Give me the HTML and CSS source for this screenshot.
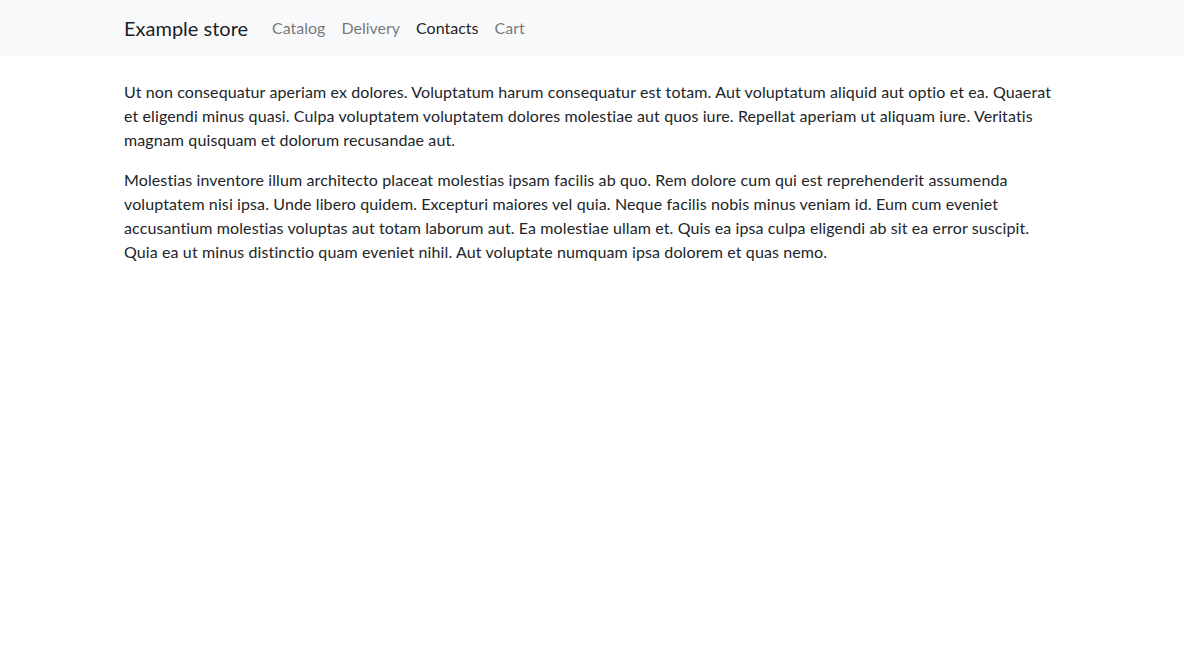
FILE: index.html
```html
<!DOCTYPE html>
<html lang="en">
<head>
<meta charset="utf-8">
<title>Example store</title>
<link rel="stylesheet" href="styles.css">
</head>
<body>
<nav class="navbar">
  <div class="container nav-inner">
    <a class="brand" href="#">Example store</a>
    <ul class="nav">
      <li><a class="nav-link" href="#">Catalog</a></li>
      <li><a class="nav-link" href="#">Delivery</a></li>
      <li><a class="nav-link active" href="#">Contacts</a></li>
      <li><a class="nav-link" href="#">Cart</a></li>
    </ul>
  </div>
</nav>
<main class="container content">
  <p>Ut non consequatur aperiam ex dolores. Voluptatum harum consequatur est totam. Aut voluptatum aliquid aut optio et ea. Quaerat et eligendi minus quasi. Culpa voluptatem voluptatem dolores molestiae aut quos iure. Repellat aperiam ut aliquam iure. Veritatis magnam quisquam et dolorum recusandae aut.</p>
  <p>Molestias inventore illum architecto placeat molestias ipsam facilis ab quo. Rem dolore cum qui est reprehenderit assumenda voluptatem nisi ipsa. Unde libero quidem. Excepturi maiores vel quia. Neque facilis nobis minus veniam id. Eum cum eveniet accusantium molestias voluptas aut totam laborum aut. Ea molestiae ullam et. Quis ea ipsa culpa eligendi ab sit ea error suscipit. Quia ea ut minus distinctio quam eveniet nihil. Aut voluptate numquam ipsa dolorem et quas nemo.</p>
</main>
</body>
</html>
```
FILE: styles.css
```css
* { box-sizing: border-box; }
html, body { margin: 0; }
body {
  font-family: Lato, "Open Sans", sans-serif;
  font-size: 16px;
  line-height: 24px;
  color: #212529;
  background: #fff;
}
.container {
  width: 960px;
  margin: 0 auto;
  padding: 0 12px;
}
.navbar {
  background: #f8f9fa;
  height: 56px;
}
.nav-inner {
  display: flex;
  align-items: center;
  height: 56px;
}
.brand {
  font-size: 20px;
  line-height: 30px;
  color: rgba(0,0,0,.9);
  text-decoration: none;
  margin-right: 16px;
}
.nav {
  display: flex;
  list-style: none;
  margin: 0;
  padding: 0;
}
.nav-link {
  display: block;
  padding: 8px;
  color: rgba(0,0,0,.55);
  text-decoration: none;
}
.nav-link.active { color: rgba(0,0,0,.9); }
.content {
  padding-top: 24px;
  letter-spacing: 0.11px;
}
.content p { margin: 0 0 16px; }
```
